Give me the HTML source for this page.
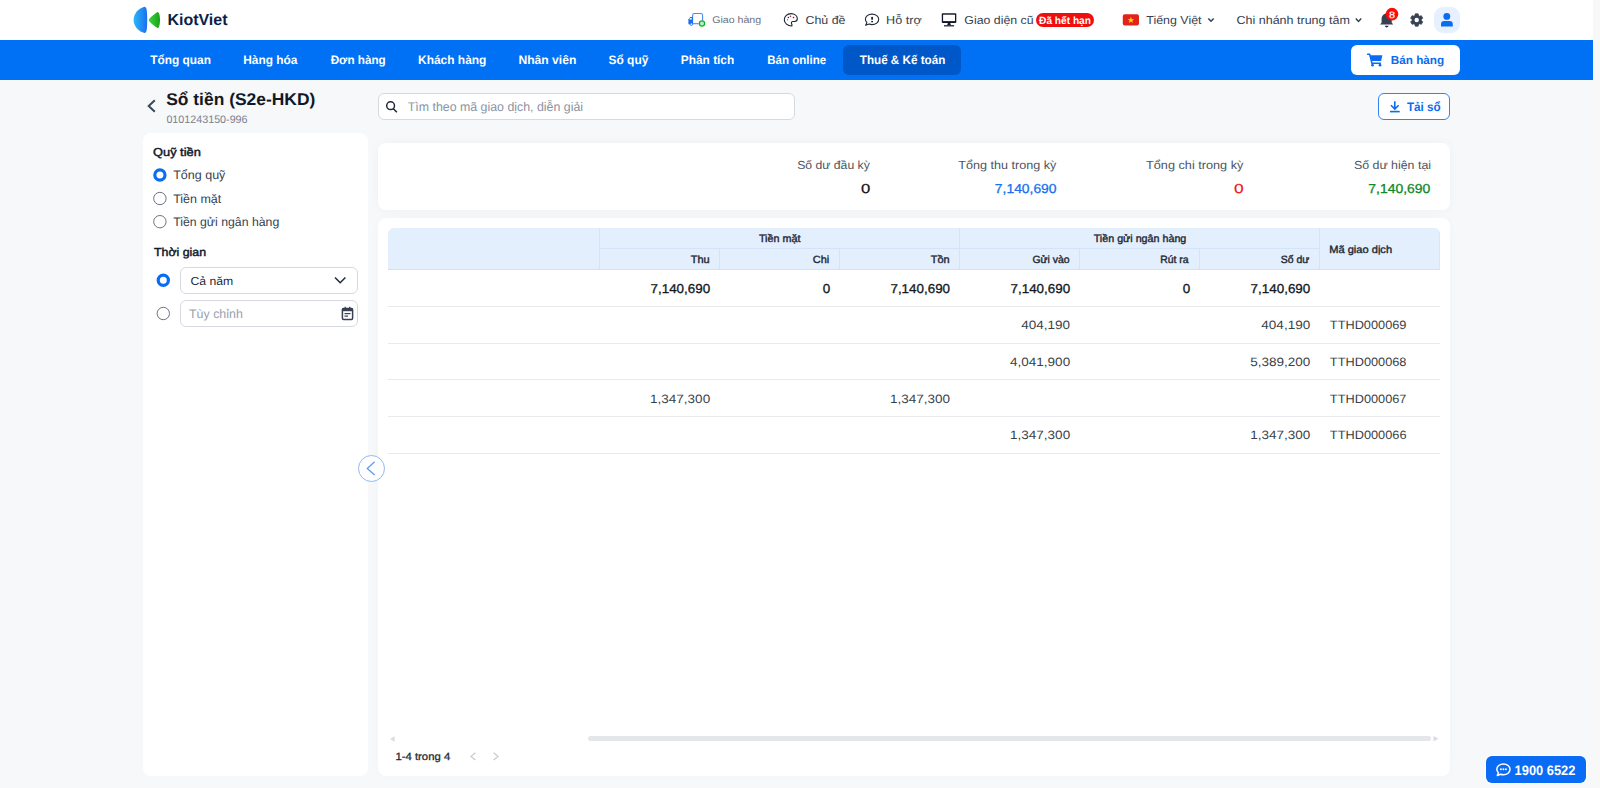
<!DOCTYPE html>
<html lang="vi"><head><meta charset="utf-8"><title>Sổ tiền (S2e-HKD)</title>
<style>
html,body{margin:0;padding:0;width:1600px;height:788px;overflow:hidden;background:#f6f8fa;font-family:"Liberation Sans",sans-serif;}
.b{position:absolute;box-sizing:border-box;}
svg{position:absolute;left:0;top:0;}
</style></head>
<body>
<div class="b" style="left:1593px;top:0;width:7px;height:788px;background:#f8f8f9"></div>
<div class="b" style="left:0;top:0;width:1593px;height:40px;background:#fff"></div>
<div class="b" style="left:0;top:40px;width:1593px;height:40px;background:#0070f4"></div>
<div class="b" style="left:843px;top:45px;width:118px;height:30px;border-radius:6px;background:#0058c8"></div>
<div class="b" style="left:1351px;top:45px;width:109px;height:30px;border-radius:6px;background:#fff"></div>
<div class="b" style="left:1433.5px;top:6.5px;width:26.6px;height:26.6px;border-radius:9px;background:#e6f0fe"></div>
<!-- search & download -->
<div class="b" style="left:378px;top:93px;width:417px;height:27px;border-radius:6px;background:#fff;border:1px solid #d6dae0"></div>
<div class="b" style="left:1378px;top:93px;width:72px;height:27px;border-radius:6px;background:#fff;border:1px solid #3383f7"></div>
<!-- cards -->
<div class="b" style="left:143px;top:133px;width:225px;height:643px;border-radius:8px;background:#fff"></div>
<div class="b" style="left:378px;top:143px;width:1072px;height:67px;border-radius:8px;background:#fff;box-shadow:0 0 12px rgba(0,0,0,0.035)"></div>
<div class="b" style="left:378px;top:218px;width:1072px;height:558px;border-radius:8px;background:#fff;box-shadow:0 0 12px rgba(0,0,0,0.018)"></div>
<!-- selects -->
<div class="b" style="left:180px;top:267px;width:178px;height:27px;border-radius:6px;background:#fff;border:1px solid #d6dae0"></div>
<div class="b" style="left:180px;top:300px;width:178px;height:27px;border-radius:6px;background:#fff;border:1px solid #d6dae0"></div>
<!-- table header -->
<div class="b" style="left:388px;top:228px;width:1052px;height:42px;border-radius:6px 6px 0 0;background:#e4effd;border-bottom:1px solid #cfe2fb;border-right:1px solid #d6e6fc"></div>
<div class="b" style="left:599px;top:228px;width:1px;height:41px;background:#d2e3fb"></div>
<div class="b" style="left:959px;top:228px;width:1px;height:41px;background:#d2e3fb"></div>
<div class="b" style="left:1319px;top:228px;width:1px;height:41px;background:#d2e3fb"></div>
<div class="b" style="left:600px;top:248px;width:719px;height:1px;background:#d2e3fb"></div>
<div class="b" style="left:719px;top:249px;width:1px;height:20px;background:#d2e3fb"></div>
<div class="b" style="left:839px;top:249px;width:1px;height:20px;background:#d2e3fb"></div>
<div class="b" style="left:1079px;top:249px;width:1px;height:20px;background:#d2e3fb"></div>
<div class="b" style="left:1199px;top:249px;width:1px;height:20px;background:#d2e3fb"></div>
<!-- row lines -->
<div class="b" style="left:388px;top:306px;width:1052px;height:1px;background:#e8eaee"></div>
<div class="b" style="left:388px;top:343px;width:1052px;height:1px;background:#e8eaee"></div>
<div class="b" style="left:388px;top:379px;width:1052px;height:1px;background:#e8eaee"></div>
<div class="b" style="left:388px;top:416px;width:1052px;height:1px;background:#e8eaee"></div>
<div class="b" style="left:388px;top:453px;width:1052px;height:1px;background:#e8eaee"></div>
<!-- scrollbar -->
<div class="b" style="left:588px;top:736px;width:843px;height:5px;border-radius:3px;background:#e4e6ea"></div>
<!-- badge / collapse / hotline -->
<div class="b" style="left:1036px;top:13px;width:58px;height:14px;border-radius:7px;background:#f00d0d"></div>
<div class="b" style="left:358px;top:455px;width:27px;height:27px;border-radius:50%;background:#fff;border:1px solid #8dbaf8"></div>
<div class="b" style="left:1486px;top:756px;width:100px;height:27px;border-radius:6px;background:#0a6cf5;box-shadow:0 0 0 1px rgba(255,255,255,0.9)"></div>

<svg width="1600" height="788" viewBox="0 0 1600 788" style="font-family:'Liberation Sans',sans-serif;text-rendering:geometricPrecision">
<!-- logo -->
<defs>
<linearGradient id="lg1" x1="0" x2="1" y1="0" y2="0"><stop offset="0" stop-color="#2ab8f7"/><stop offset="1" stop-color="#1c6ef2"/></linearGradient>
<linearGradient id="lg2" x1="0" x2="1" y1="0" y2="0"><stop offset="0" stop-color="#3fd23f"/><stop offset="1" stop-color="#17a317"/></linearGradient>
</defs>
<path d="M144.5 6.8 C139 8 133.6 13.5 133.6 20 C133.6 26.5 139 31.8 144.5 33 C146.5 33 147.2 30 147.2 20 C147.2 10 146.5 6.8 144.5 6.8 Z" fill="url(#lg1)"/>
<path d="M157.5 11.9 C155 13.5 149 18 148.7 20 C149 22 155 26.5 157.5 28.1 C159 28.5 160 24 160 20 C160 16 159 11.5 157.5 11.9 Z" fill="url(#lg2)"/>
<!-- truck icon -->
<path d="M692.6 23.8 V15.4 Q692.6 13.5 694.5 13.5 H700.7 Q702.6 13.5 702.6 15.4 V20.5" fill="none" stroke="#4d88f6" stroke-width="1.1"/>
<path d="M692.6 23.7 H698.8" fill="none" stroke="#4d88f6" stroke-width="1.1"/>
<path d="M688.4 24.3 V19.3 L690.4 17 H692.9 V24.3 Z" fill="#1a6ff0"/>
<rect x="689.6" y="18.1" width="2.2" height="1.4" fill="#fff"/>
<circle cx="691.3" cy="24.2" r="1.25" fill="#fff" stroke="#1a6ff0" stroke-width="0.9"/>
<circle cx="702" cy="23.5" r="2.6" fill="#bfe9c6" stroke="#0fb32a" stroke-width="1.2"/>
<!-- palette -->
<path d="M791.8 26 C787.5 26 784.3 23 784.3 19.7 C784.3 16.2 787.3 13.6 791 13.6 C794.6 13.6 797.3 15.8 797.3 18.8 C797.3 20.5 796.2 21.5 794.5 21.5 L792.8 21.5 C791.9 21.5 791.4 22.2 791.4 23 C791.4 23.7 792 24.2 792 25 C792 25.6 791.9 26 791.8 26 Z" fill="none" stroke="#1c1f2e" stroke-width="1.1"/>
<circle cx="788.4" cy="17.4" r="0.75" fill="#1a1a8a"/><circle cx="790.5" cy="16.3" r="0.75" fill="#b0101a"/><circle cx="793.5" cy="17.4" r="0.75" fill="#1a1a8a"/><circle cx="787.5" cy="19.8" r="0.6" fill="#6a3a8a"/>
<!-- help bubble -->
<path d="M872 14.1 C868.3 14.1 865.4 16.4 865.4 19.3 C865.4 20.6 866 21.8 866.9 22.7 L865.6 25.3 L869.2 24.1 C870.1 24.4 871 24.6 872 24.6 C875.7 24.6 878.7 22.3 878.7 19.3 C878.7 16.4 875.7 14.1 872 14.1 Z" fill="none" stroke="#1f2937" stroke-width="1.1" stroke-linejoin="round"/>
<rect x="871.2" y="16.9" width="1.8" height="2.8" fill="#1f2937"/><rect x="871.2" y="20.9" width="1.8" height="1.4" fill="#1f2937"/>
<!-- monitor -->
<rect x="941.8" y="13.3" width="14.5" height="9.6" rx="0.9" fill="#111827"/>
<rect x="943.1" y="14.7" width="11.9" height="6.4" fill="#fff"/>
<path d="M948 22.8 L950.1 22.8 L951 25.2 L947.1 25.2 Z" fill="#111827"/>
<rect x="944" y="25" width="10.1" height="1.5" fill="#3b4250"/>
<!-- flag -->
<rect x="1122.8" y="14.2" width="16.2" height="11.3" rx="2" fill="#e0241c"/>
<path d="M1130.9 16.8 L1131.7 19.2 L1134.2 19.2 L1132.2 20.7 L1132.9 23.1 L1130.9 21.6 L1128.9 23.1 L1129.6 20.7 L1127.6 19.2 L1130.1 19.2 Z" fill="#ffde00"/>
<!-- chevrons -->
<path d="M1208.3 18.4 L1211 21.2 L1213.7 18.4" fill="none" stroke="#374151" stroke-width="1.5"/>
<path d="M1355.8 18.6 L1358.5 21.4 L1361.2 18.6" fill="none" stroke="#374151" stroke-width="1.5"/>
<!-- bell -->
<path d="M1386.6 13.6 C1383.4 13.6 1381.6 16.2 1381.6 19.2 L1381.6 22.6 L1380.1 24.6 L1393.2 24.6 L1391.7 22.6 L1391.7 19.2 C1391.7 16.2 1389.8 13.6 1386.6 13.6 Z" fill="#374151"/>
<path d="M1384.6 25.8 Q1386.7 29.2 1388.8 25.8 Z" fill="#1f2937"/>
<circle cx="1392" cy="14.1" r="6.3" fill="#ff0a0a"/>
<!-- gear -->
<path d="M1418.64 15.83 L1418.12 13.86 L1415.28 13.86 L1414.76 15.83 L1414.06 16.23 L1412.09 15.70 L1410.68 18.16 L1412.12 19.60 L1412.12 20.40 L1410.68 21.84 L1412.09 24.30 L1414.06 23.77 L1414.76 24.17 L1415.28 26.14 L1418.12 26.14 L1418.64 24.17 L1419.34 23.77 L1421.31 24.30 L1422.72 21.84 L1421.28 20.40 L1421.28 19.60 L1422.72 18.16 L1421.31 15.70 L1419.34 16.23 Z" fill="#374151" stroke="#374151" stroke-width="0.8" stroke-linejoin="round"/>
<circle cx="1416.7" cy="20.0" r="2.2" fill="#fff"/>
<!-- user -->
<circle cx="1446.8" cy="16.4" r="3.4" fill="#0a6cf0"/>
<path d="M1441 26.6 L1441 24.2 Q1441 21.1 1444.2 21.1 L1449.6 21.1 Q1452.8 21.1 1452.8 24.2 L1452.8 26.6 Z" fill="#0a6cf0"/>
<!-- cart -->
<path d="M1367.6 54.3 L1369.7 54.3 L1371.9 63.2 L1380.4 63.2" fill="none" stroke="#0a6cf0" stroke-width="1.5" stroke-linejoin="round" stroke-linecap="round"/>
<path d="M1370.4 55.2 L1382.4 55.2 L1381.1 61 L1371.5 61 Z" fill="#0a6cf0"/>
<circle cx="1372.5" cy="65.2" r="1.35" fill="#0a6cf0"/><circle cx="1380" cy="65.2" r="1.35" fill="#0a6cf0"/>
<!-- download -->
<path d="M1394.8 101.3 L1394.8 108.8 M1391 105.2 L1394.8 109 L1398.6 105.2" fill="none" stroke="#0a6cf0" stroke-width="1.6"/>
<rect x="1390" y="110.8" width="9.7" height="1.6" fill="#0a6cf0"/>
<!-- search -->
<circle cx="390.6" cy="105.7" r="3.9" fill="none" stroke="#1f2937" stroke-width="1.5"/>
<path d="M393.4 108.8 L396.9 112.2" stroke="#1f2937" stroke-width="1.6"/>
<!-- back -->
<path d="M154.8 100.3 L148.7 106 L154.8 111.7" fill="none" stroke="#3a475a" stroke-width="2"/>
<!-- radios -->
<circle cx="159.9" cy="175" r="5.1" fill="#fff" stroke="#0a6cf0" stroke-width="3.2"/>
<circle cx="159.9" cy="198.5" r="6.2" fill="#fff" stroke="#6b7280" stroke-width="1"/>
<circle cx="159.9" cy="221.7" r="6.2" fill="#fff" stroke="#6b7280" stroke-width="1"/>
<circle cx="163.3" cy="280.2" r="5.1" fill="#fff" stroke="#0a6cf0" stroke-width="3.2"/>
<circle cx="163.3" cy="313.5" r="6.2" fill="#fff" stroke="#6b7280" stroke-width="1"/>
<!-- select chevron -->
<path d="M335 277.5 L340.2 282.7 L345.4 277.5" fill="none" stroke="#1f2937" stroke-width="1.5"/>
<!-- calendar -->
<rect x="342.4" y="308.4" width="10.2" height="11" rx="1.2" fill="none" stroke="#374151" stroke-width="1.5"/>
<rect x="342.4" y="308.4" width="10.2" height="2.8" fill="#374151"/>
<rect x="344.6" y="306.8" width="1.3" height="2.5" fill="#374151"/><rect x="349.1" y="306.8" width="1.3" height="2.5" fill="#374151"/>
<rect x="344.5" y="313" width="6" height="1.2" fill="#374151"/><rect x="344.5" y="315.5" width="3.6" height="1.2" fill="#374151"/>
<!-- collapse chevron -->
<path d="M374.6 461.8 L367.3 468.4 L374.6 475" fill="none" stroke="#5b9cf6" stroke-width="1.3"/>
<!-- scroll arrows -->
<path d="M390 739 L394.6 736.3 L394.6 741.7 Z" fill="#d9dce1"/>
<path d="M1438.4 738.8 L1433.5 736 L1433.5 741.6 Z" fill="#d9dce1"/>
<!-- pagination chevrons -->
<path d="M475.4 752.8 L471 756.4 L475.4 760" fill="none" stroke="#c5c9d0" stroke-width="1.2"/>
<path d="M493.6 752.8 L498 756.4 L493.6 760" fill="none" stroke="#c5c9d0" stroke-width="1.2"/>
<!-- chat icon -->
<path d="M1503.4 763.9 C1499.7 763.9 1496.8 766.3 1496.8 769.3 C1496.8 770.7 1497.4 771.9 1498.4 772.8 L1497.3 775.6 L1500.6 774.3 C1501.5 774.6 1502.4 774.8 1503.4 774.8 C1507.1 774.8 1510 772.4 1510 769.3 C1510 766.3 1507.1 763.9 1503.4 763.9 Z" fill="none" stroke="#fff" stroke-width="1.5" stroke-linejoin="round"/>
<circle cx="1500.9" cy="769.3" r="0.95" fill="#fff"/><circle cx="1503.4" cy="769.3" r="0.95" fill="#fff"/><circle cx="1505.9" cy="769.3" r="0.95" fill="#fff"/>
<text x="167.42" y="25.10" font-size="16" font-weight="700" fill="#0b1f47" textLength="60.08" lengthAdjust="spacingAndGlyphs">KiotViet</text>
<text x="712.17" y="23.20" font-size="9.8" font-weight="400" fill="#6b7280" textLength="49.01" lengthAdjust="spacingAndGlyphs">Giao hàng</text>
<text x="805.52" y="23.80" font-size="11.5" font-weight="400" fill="#374151" textLength="39.97" lengthAdjust="spacingAndGlyphs">Chủ đề</text>
<text x="886.12" y="23.80" font-size="11.5" font-weight="400" fill="#374151" textLength="35.58" lengthAdjust="spacingAndGlyphs">Hỗ trợ</text>
<text x="964.32" y="23.80" font-size="11.5" font-weight="400" fill="#374151" textLength="69.30" lengthAdjust="spacingAndGlyphs">Giao diện cũ</text>
<text x="1039.05" y="23.50" font-size="10.5" font-weight="700" fill="#ffffff" textLength="51.91" lengthAdjust="spacingAndGlyphs">Đã hết hạn</text>
<text x="1146.35" y="23.90" font-size="11.5" font-weight="400" fill="#374151" textLength="55.14" lengthAdjust="spacingAndGlyphs">Tiếng Việt</text>
<text x="1236.51" y="24.20" font-size="11.5" font-weight="400" fill="#374151" textLength="113.34" lengthAdjust="spacingAndGlyphs">Chi nhánh trung tâm</text>
<text x="150.29" y="64.10" font-size="12.2" font-weight="700" fill="#ffffff" textLength="60.66" lengthAdjust="spacingAndGlyphs">Tổng quan</text>
<text x="243.25" y="64.10" font-size="12.2" font-weight="700" fill="#ffffff" textLength="54.12" lengthAdjust="spacingAndGlyphs">Hàng hóa</text>
<text x="330.70" y="64.10" font-size="12.2" font-weight="700" fill="#ffffff" textLength="55.03" lengthAdjust="spacingAndGlyphs">Đơn hàng</text>
<text x="418.00" y="64.10" font-size="12.2" font-weight="700" fill="#ffffff" textLength="68.39" lengthAdjust="spacingAndGlyphs">Khách hàng</text>
<text x="518.44" y="64.10" font-size="12.2" font-weight="700" fill="#ffffff" textLength="57.90" lengthAdjust="spacingAndGlyphs">Nhân viên</text>
<text x="608.53" y="64.10" font-size="12.2" font-weight="700" fill="#ffffff" textLength="39.86" lengthAdjust="spacingAndGlyphs">Sổ quỹ</text>
<text x="680.85" y="64.10" font-size="12.2" font-weight="700" fill="#ffffff" textLength="53.37" lengthAdjust="spacingAndGlyphs">Phân tích</text>
<text x="767.17" y="64.10" font-size="12.2" font-weight="700" fill="#ffffff" textLength="58.99" lengthAdjust="spacingAndGlyphs">Bán online</text>
<text x="859.79" y="64.10" font-size="12.2" font-weight="700" fill="#ffffff" textLength="85.52" lengthAdjust="spacingAndGlyphs">Thuế &amp; Kế toán</text>
<text x="1390.73" y="64.00" font-size="11.6" font-weight="700" fill="#0a6cf0" textLength="53.48" lengthAdjust="spacingAndGlyphs">Bán hàng</text>
<text x="166.22" y="105.00" font-size="17" font-weight="700" fill="#111827" textLength="149.06" lengthAdjust="spacingAndGlyphs">Sổ tiền (S2e-HKD)</text>
<text x="166.40" y="122.50" font-size="10.9" font-weight="400" fill="#7b8190" textLength="81.17" lengthAdjust="spacingAndGlyphs">0101243150-996</text>
<text x="407.72" y="110.85" font-size="12.5" font-weight="400" fill="#8a93a3" textLength="175.35" lengthAdjust="spacingAndGlyphs">Tìm theo mã giao dịch, diễn giải</text>
<text x="1406.89" y="110.80" font-size="12.3" font-weight="700" fill="#0a6cf0" textLength="33.69" lengthAdjust="spacingAndGlyphs">Tải sổ</text>
<text x="153.02" y="155.80" font-size="11.5" font-weight="400" fill="#111827" stroke="#111827" stroke-width="0.45" textLength="47.78" lengthAdjust="spacingAndGlyphs">Quỹ tiền</text>
<text x="173.20" y="179.20" font-size="12.3" font-weight="400" fill="#374151" textLength="52.18" lengthAdjust="spacingAndGlyphs">Tổng quỹ</text>
<text x="173.20" y="202.50" font-size="12.3" font-weight="400" fill="#374151" textLength="48.07" lengthAdjust="spacingAndGlyphs">Tiền mặt</text>
<text x="173.22" y="225.60" font-size="12.3" font-weight="400" fill="#374151" textLength="106.02" lengthAdjust="spacingAndGlyphs">Tiền gửi ngân hàng</text>
<text x="154.00" y="255.90" font-size="11.5" font-weight="400" fill="#111827" stroke="#111827" stroke-width="0.45" textLength="52.06" lengthAdjust="spacingAndGlyphs">Thời gian</text>
<text x="190.41" y="284.50" font-size="11.6" font-weight="400" fill="#1f2937" textLength="42.81" lengthAdjust="spacingAndGlyphs">Cả năm</text>
<text x="189.01" y="317.80" font-size="12.4" font-weight="400" fill="#9aa1ad" textLength="53.85" lengthAdjust="spacingAndGlyphs">Tùy chỉnh</text>
<text x="797.15" y="168.90" font-size="11.7" font-weight="400" fill="#4b5563" textLength="72.64" lengthAdjust="spacingAndGlyphs">Số dư đầu kỳ</text>
<text x="958.37" y="168.90" font-size="11.7" font-weight="400" fill="#4b5563" textLength="98.03" lengthAdjust="spacingAndGlyphs">Tổng thu trong kỳ</text>
<text x="1146.06" y="168.90" font-size="11.7" font-weight="400" fill="#4b5563" textLength="97.33" lengthAdjust="spacingAndGlyphs">Tổng chi trong kỳ</text>
<text x="1353.94" y="168.90" font-size="11.7" font-weight="400" fill="#4b5563" textLength="77.08" lengthAdjust="spacingAndGlyphs">Số dư hiện tại</text>
<text x="861.01" y="193.00" font-size="13" font-weight="400" fill="#111111" stroke="#111111" stroke-width="0.2" textLength="9.27" lengthAdjust="spacingAndGlyphs">0</text>
<text x="994.87" y="193.00" font-size="13" font-weight="400" fill="#1a6ff2" stroke="#1a6ff2" stroke-width="0.3" textLength="61.68" lengthAdjust="spacingAndGlyphs">7,140,690</text>
<text x="1233.92" y="193.00" font-size="13" font-weight="400" fill="#f01414" stroke="#f01414" stroke-width="0.15" textLength="9.68" lengthAdjust="spacingAndGlyphs">0</text>
<text x="1368.37" y="193.00" font-size="13" font-weight="400" fill="#0f8a2a" stroke="#0f8a2a" stroke-width="0.3" textLength="61.99" lengthAdjust="spacingAndGlyphs">7,140,690</text>
<text x="758.92" y="242.00" font-size="10.5" font-weight="400" fill="#1f2937" stroke="#1f2937" stroke-width="0.4" textLength="41.61" lengthAdjust="spacingAndGlyphs">Tiền mặt</text>
<text x="1093.73" y="242.00" font-size="10.5" font-weight="400" fill="#1f2937" stroke="#1f2937" stroke-width="0.4" textLength="92.61" lengthAdjust="spacingAndGlyphs">Tiền gửi ngân hàng</text>
<text x="690.71" y="262.70" font-size="10.5" font-weight="400" fill="#1f2937" stroke="#1f2937" stroke-width="0.4" textLength="18.87" lengthAdjust="spacingAndGlyphs">Thu</text>
<text x="812.87" y="262.70" font-size="10.5" font-weight="400" fill="#1f2937" stroke="#1f2937" stroke-width="0.4" textLength="16.41" lengthAdjust="spacingAndGlyphs">Chi</text>
<text x="930.81" y="262.70" font-size="10.5" font-weight="400" fill="#1f2937" stroke="#1f2937" stroke-width="0.4" textLength="18.84" lengthAdjust="spacingAndGlyphs">Tồn</text>
<text x="1032.50" y="262.70" font-size="10.5" font-weight="400" fill="#1f2937" stroke="#1f2937" stroke-width="0.4" textLength="37.17" lengthAdjust="spacingAndGlyphs">Gửi vào</text>
<text x="1160.30" y="262.70" font-size="10.5" font-weight="400" fill="#1f2937" stroke="#1f2937" stroke-width="0.4" textLength="28.29" lengthAdjust="spacingAndGlyphs">Rút ra</text>
<text x="1280.83" y="262.70" font-size="10.5" font-weight="400" fill="#1f2937" stroke="#1f2937" stroke-width="0.4" textLength="28.47" lengthAdjust="spacingAndGlyphs">Số dư</text>
<text x="1329.25" y="252.60" font-size="10.5" font-weight="400" fill="#1f2937" stroke="#1f2937" stroke-width="0.4" textLength="62.81" lengthAdjust="spacingAndGlyphs">Mã giao dịch</text>
<text x="650.53" y="292.80" font-size="12.9" font-weight="400" fill="#15181d" stroke="#15181d" stroke-width="0.3" textLength="59.66" lengthAdjust="spacingAndGlyphs">7,140,690</text>
<text x="822.65" y="292.80" font-size="12.9" font-weight="400" fill="#15181d" stroke="#15181d" stroke-width="0.3" textLength="7.46" lengthAdjust="spacingAndGlyphs">0</text>
<text x="890.43" y="292.80" font-size="12.9" font-weight="400" fill="#15181d" stroke="#15181d" stroke-width="0.3" textLength="59.66" lengthAdjust="spacingAndGlyphs">7,140,690</text>
<text x="1010.53" y="292.80" font-size="12.9" font-weight="400" fill="#15181d" stroke="#15181d" stroke-width="0.3" textLength="59.66" lengthAdjust="spacingAndGlyphs">7,140,690</text>
<text x="1182.65" y="292.80" font-size="12.9" font-weight="400" fill="#15181d" stroke="#15181d" stroke-width="0.3" textLength="7.46" lengthAdjust="spacingAndGlyphs">0</text>
<text x="1250.63" y="292.80" font-size="12.9" font-weight="400" fill="#15181d" stroke="#15181d" stroke-width="0.3" textLength="59.66" lengthAdjust="spacingAndGlyphs">7,140,690</text>
<text x="1021.26" y="329.15" font-size="12.1" font-weight="400" fill="#3a3f47" textLength="48.79" lengthAdjust="spacingAndGlyphs">404,190</text>
<text x="1261.36" y="329.15" font-size="12.1" font-weight="400" fill="#3a3f47" textLength="48.79" lengthAdjust="spacingAndGlyphs">404,190</text>
<text x="1329.88" y="329.15" font-size="12.1" font-weight="400" fill="#3a3f47" textLength="76.53" lengthAdjust="spacingAndGlyphs">TTHD000069</text>
<text x="1010.10" y="365.90" font-size="12.1" font-weight="400" fill="#3a3f47" textLength="60.05" lengthAdjust="spacingAndGlyphs">4,041,900</text>
<text x="1250.20" y="365.90" font-size="12.1" font-weight="400" fill="#3a3f47" textLength="60.05" lengthAdjust="spacingAndGlyphs">5,389,200</text>
<text x="1329.88" y="365.90" font-size="12.1" font-weight="400" fill="#3a3f47" textLength="76.59" lengthAdjust="spacingAndGlyphs">TTHD000068</text>
<text x="650.10" y="402.65" font-size="12.1" font-weight="400" fill="#3a3f47" textLength="60.05" lengthAdjust="spacingAndGlyphs">1,347,300</text>
<text x="890.00" y="402.65" font-size="12.1" font-weight="400" fill="#3a3f47" textLength="60.05" lengthAdjust="spacingAndGlyphs">1,347,300</text>
<text x="1329.88" y="402.65" font-size="12.1" font-weight="400" fill="#3a3f47" textLength="76.59" lengthAdjust="spacingAndGlyphs">TTHD000067</text>
<text x="1010.10" y="439.40" font-size="12.1" font-weight="400" fill="#3a3f47" textLength="60.05" lengthAdjust="spacingAndGlyphs">1,347,300</text>
<text x="1250.20" y="439.40" font-size="12.1" font-weight="400" fill="#3a3f47" textLength="60.05" lengthAdjust="spacingAndGlyphs">1,347,300</text>
<text x="1329.88" y="439.40" font-size="12.1" font-weight="400" fill="#3a3f47" textLength="76.61" lengthAdjust="spacingAndGlyphs">TTHD000066</text>
<text x="395.43" y="759.80" font-size="10.5" font-weight="400" fill="#1f2937" stroke="#1f2937" stroke-width="0.3" textLength="54.78" lengthAdjust="spacingAndGlyphs">1-4 trong 4</text>
<text x="1514.61" y="774.70" font-size="13.7" font-weight="700" fill="#ffffff" textLength="60.79" lengthAdjust="spacingAndGlyphs">1900 6522</text>
<text x="1388.98" y="17.70" font-size="9.3" font-weight="400" fill="#ffffff" stroke="#ffffff" stroke-width="0.2" textLength="6.05" lengthAdjust="spacingAndGlyphs">8</text>
</svg>
</body></html>
